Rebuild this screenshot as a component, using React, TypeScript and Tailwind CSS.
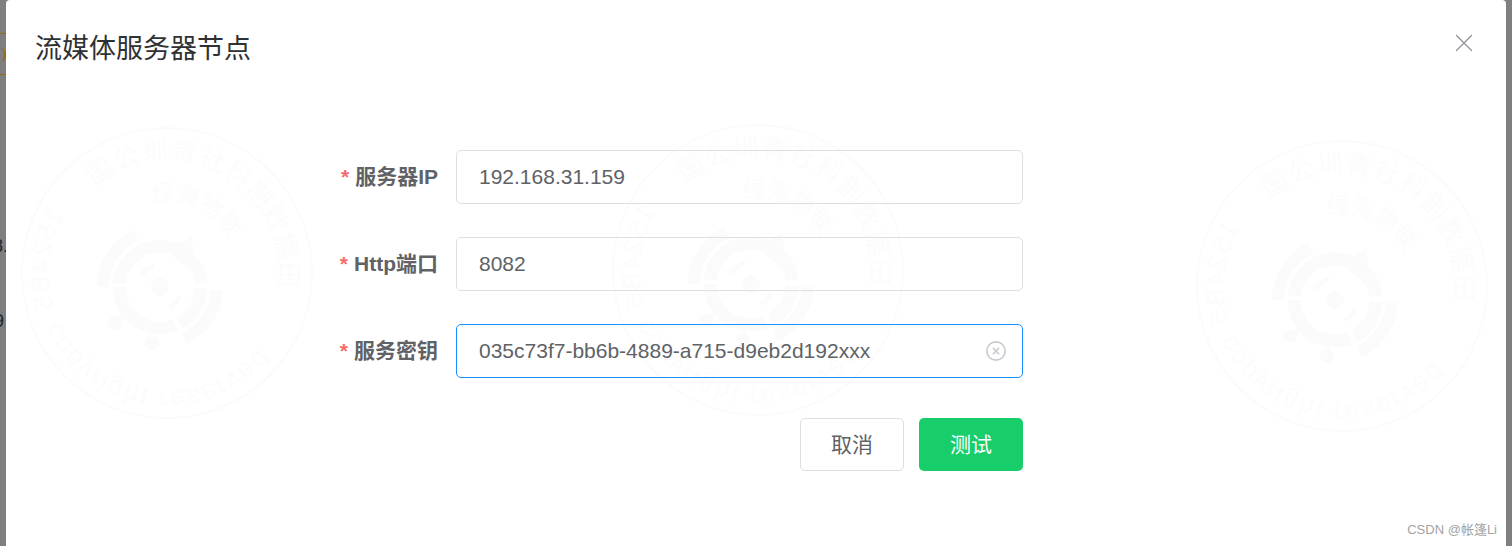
import { CircleX, X } from 'lucide-react';

const sans = "font-['Liberation_Sans','Noto_Sans_CJK_SC',sans-serif]";

const polar = (r: number, deg: number) => {
    const a = ((deg - 90) * Math.PI) / 180;
    return `${150 + r * Math.cos(a)} ${150 + r * Math.sin(a)}`;
};

const arc = (r: number, from: number, to: number) =>
    `M ${polar(r, from)} A ${r} ${r} 0 ${to - from > 180 ? 1 : 0} 1 ${polar(r, to)}`;

// faint company seal repeated behind the form
const Stamp = ({ id, className }: { id: string; className: string }) => (
    <svg viewBox="0 0 300 300" className={`absolute h-[300px] w-[300px] ${className}`}>
        <g fill="none" stroke="#fbfbfb">
            <circle cx="150" cy="150" r="145" strokeWidth="2" />
            <g transform="translate(-7 14)">
                <path d={arc(22, -60, -15)} strokeWidth="5" />
                <path d={arc(22, 115, 155)} strokeWidth="5" />
                <path d={arc(41, -85, 85)} strokeWidth="13" />
                <path d={arc(41, 92, 152)} strokeWidth="13" />
                <path d={arc(41, 158, 270)} strokeWidth="13" />
                <path d={arc(57, -90, -25)} strokeWidth="12" />
                <path d={arc(57, 93, 155)} strokeWidth="12" />
            </g>
            <path d="M 98 200 L 116 186 M 135 220 L 137 198" strokeWidth="4" />
        </g>
        <g fill="#fbfbfb">
            <circle cx="143" cy="164" r="9" />
            <circle cx="98" cy="200" r="7" />
            <circle cx="135" cy="220" r="7" />
            <path d="M 145 124 C 160 122 170 118 175 110 C 175 125 178 140 181 154 Z" />
        </g>
        <defs>
            <path id={`${id}-top`} d={arc(113, -40, 98)} />
            <path id={`${id}-mid`} d={arc(72, -12, 72)} />
            <path id={`${id}-low`} d={arc(118, -66, 66)} />
            <path id={`${id}-left`} d={arc(118, -120, -72)} />
        </defs>
        <g fill="#fcfcfc" className={sans}>
            <text fontSize="26" letterSpacing="1.2">
                <textPath href={`#${id}-top`}>国公圳青社科剖数据田</textPath>
            </text>
            <text fontSize="23">
                <textPath href={`#${id}-mid`}>绿海物联</textPath>
            </text>
            <g transform="matrix(1 0 0 -1 0 300)" fontSize="26">
                <text letterSpacing="1.5">
                    <textPath href={`#${id}-low`}>copyright reserved</textPath>
                </text>
                <text letterSpacing="1.5">
                    <textPath href={`#${id}-left`}>1524B56</textPath>
                </text>
            </g>
        </g>
    </svg>
);

const Field = ({ label, value, focused }: { label: string; value: string; focused?: boolean }) => (
    <div className="flex items-center">
        <label className="w-[132px] pr-[18px] text-right text-[21px] font-bold leading-[54px] text-[#606266]">
            <span className="mr-[6px] text-[#f56c6c]">*</span>
            {label}
        </label>
        <div
            className={`flex h-[54px] w-[567px] items-center rounded-[5px] border pl-[22px] pr-[15px] ${
                focused ? 'border-[#1890ff]' : 'border-[#dcdfe6]'
            }`}
        >
            <input
                readOnly
                value={value}
                className="min-w-0 flex-1 bg-transparent text-[21px] text-[#606266] outline-none"
            />
            {focused && <CircleX size={22} strokeWidth={1.8} className="text-[#c8cacf]" />}
        </div>
    </div>
);

export default function App() {
    return (
        <div className={`relative flex h-[546px] w-[1512px] overflow-hidden bg-[#7f7f7f] px-[6px] ${sans}`}>
            {/* what shows of the page under the mask */}
            <div className="absolute left-0 top-[33px] w-[6px] border-t border-dashed border-[#96681f]" />
            <div className="absolute left-0 top-[74px] w-[6px] border-t border-dashed border-[#96681f]" />
            <div className="absolute left-0 top-[48px] h-[14px] w-[6px] rounded-r-full border-r-2 border-[#96681f]" />
            <span className="absolute left-[-7px] top-[233px] text-[18px] text-[#1c2530]">8.</span>
            <span className="absolute left-[-6px] top-[308px] text-[18px] text-[#1c2530]">9</span>

            <div className="relative flex-1 overflow-hidden rounded-t-[4px] bg-white">
                <Stamp id="a" className="left-[11px] top-[123px]" />
                <Stamp id="b" className="left-[602px] top-[120px]" />
                <Stamp id="c" className="left-[1186px] top-[136px]" />

                <header className="relative flex h-[150px] items-start justify-between pl-[29px] pr-[27px] pt-[28px]">
                    <h2 className="mt-[2px] text-[27px] leading-[38px] font-normal text-[#303133]">流媒体服务器节点</h2>
                    <X size={30} strokeWidth={1} className="text-[#909399]" />
                </header>

                <form className="relative ml-[318px] flex w-[699px] flex-col gap-[33px]">
                    <Field label="服务器IP" value="192.168.31.159" />
                    <Field label="Http端口" value="8082" />
                    <Field label="服务密钥" value="035c73f7-bb6b-4889-a715-d9eb2d192xxx" focused />
                    <div className="mt-[7px] flex justify-end gap-[15px]">
                        <button
                            type="button"
                            className="h-[53px] w-[104px] rounded-[5px] border border-[#dcdfe6] text-[21px] text-[#606266]"
                        >
                            取消
                        </button>
                        <button
                            type="button"
                            className="h-[53px] w-[104px] rounded-[5px] bg-[#18ce6a] text-[21px] text-white"
                        >
                            测试
                        </button>
                    </div>
                </form>

                <span className="absolute bottom-[7px] right-[9px] text-[13px] text-[#a3a3a3]">CSDN @帐篷Li</span>
            </div>
        </div>
    );
}
